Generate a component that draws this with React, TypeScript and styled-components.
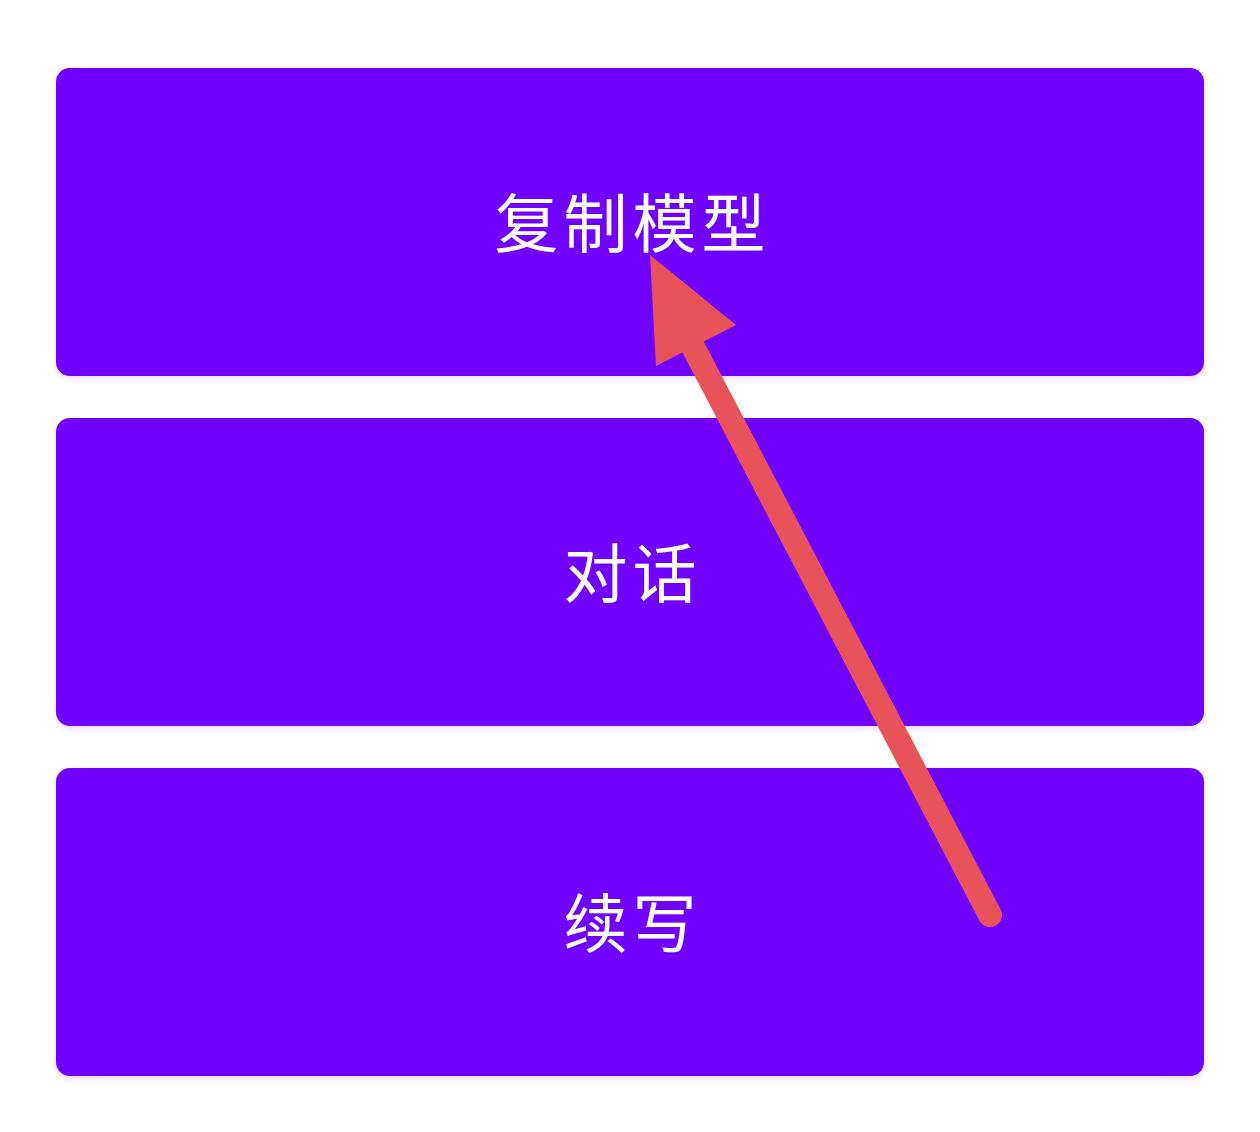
import styled, { createGlobalStyle } from 'styled-components';

const GlobalStyle = createGlobalStyle`
  html, body {
    margin: 0;
    padding: 0;
    background: #ffffff;
  }
  body {
    font-family: "Noto Sans CJK SC", "Noto Sans", sans-serif;
  }
`;

const Page = styled.div`
  position: relative;
  width: 1260px;
  height: 1132px;
  box-sizing: border-box;
  padding: 68px 56px 0 56px;
  background: #ffffff;
`;

const ButtonList = styled.div`
  display: flex;
  flex-direction: column;
  gap: 42px;
`;

const ModeButton = styled.button`
  display: flex;
  align-items: center;
  justify-content: center;
  width: 100%;
  height: 308px;
  border: none;
  border-radius: 14px;
  background: #7000ff;
  box-shadow: 0 3px 6px rgba(112, 0, 255, 0.14);
  color: #ffffff;
  font-family: "Noto Sans CJK SC", "Noto Sans", sans-serif;
  font-size: 64px;
  font-weight: 400;
  letter-spacing: 5px;
  cursor: pointer;
  padding: 0 0 6px 5px;
`;

const ArrowOverlay = styled.svg`
  position: absolute;
  left: 0;
  top: 0;
  width: 1260px;
  height: 1132px;
  pointer-events: none;
`;

const modes = ['复制模型', '对话', '续写'];

export default function App() {
  return (
    <>
      <GlobalStyle />
      <Page>
        <ButtonList>
          {modes.map((m) => (
            <ModeButton key={m}>{m}</ModeButton>
          ))}
        </ButtonList>
        <ArrowOverlay viewBox="0 0 1260 1132">
          <line
            x1="990"
            y1="915"
            x2="680"
            y2="322"
            stroke="#e8535a"
            strokeWidth="24"
            strokeLinecap="round"
          />
          <polygon points="650,255 736,325 656,366" fill="#e8535a" />
        </ArrowOverlay>
      </Page>
    </>
  );
}
